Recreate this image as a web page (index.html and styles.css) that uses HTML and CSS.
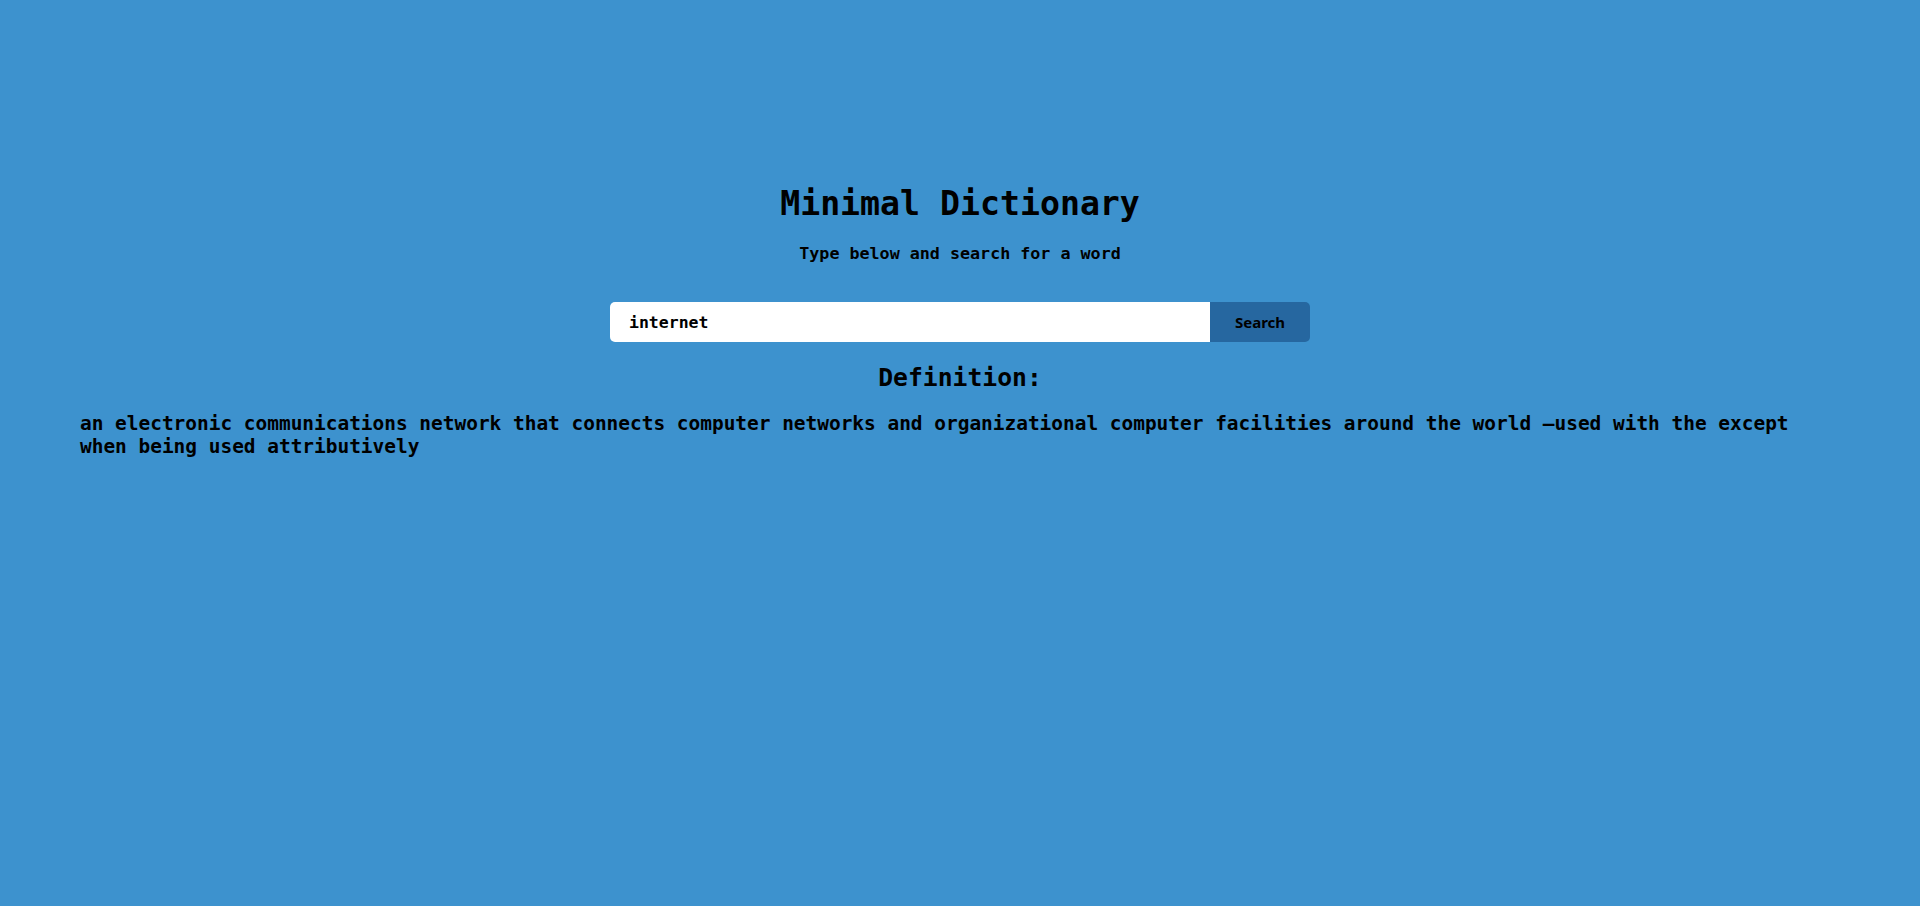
FILE: index.html
```html
<!DOCTYPE html>
<html lang="en">
<head>
<meta charset="utf-8">
<title>Minimal Dictionary</title>
<link rel="stylesheet" href="styles.css">
</head>
<body>
<main class="app">
  <h1 class="title">Minimal Dictionary</h1>
  <p class="subtitle">Type below and search for a word</p>
  <form class="search">
    <input class="search-input" type="text" value="internet">
    <button class="search-btn" type="button">Search</button>
  </form>
  <h2 class="def-heading">Definition:</h2>
  <p class="def-text">an electronic communications network that connects computer networks and organizational computer facilities around the world —used with the except when being used attributively</p>
</main>
</body>
</html>
```
FILE: styles.css
```css
html, body {
  margin: 0;
  padding: 0;
}
body {
  background: #3d92ce;
  min-height: 100vh;
  font-family: "DejaVu Sans Mono", "Liberation Mono", monospace;
  color: #000;
}
.app {
  padding-top: 184px;
  text-align: center;
}
.title {
  margin: 0;
  font-size: 33.2px;
  line-height: 40px;
  font-weight: bold;
}
.subtitle {
  margin: 19px 0 0;
  font-size: 16.7px;
  line-height: 20px;
  font-weight: bold;
}
.search {
  margin-top: 39px;
  display: flex;
  justify-content: center;
}
.search-input {
  width: 600px;
  height: 40px;
  box-sizing: border-box;
  border: none;
  outline: none;
  border-radius: 5px 0 0 5px;
  background: #fff;
  padding: 0 0 0 19px;
  font-family: "DejaVu Sans Mono", monospace;
  font-size: 16.5px;
  font-weight: bold;
  color: #000;
}
.search-btn {
  width: 100px;
  height: 40px;
  border: none;
  border-radius: 0 5px 5px 0;
  background: #2667a0;
  color: #000;
  font-family: "Noto Sans", sans-serif;
  font-size: 15px;
  font-weight: bold;
  padding: 0;
}
.def-heading {
  margin: 21px 0 0;
  font-size: 24.7px;
  line-height: 30px;
  font-weight: bold;
}
.def-text {
  margin: 19px 0 0;
  padding: 0 80px;
  text-align: left;
  font-size: 19.45px;
  line-height: 23px;
  font-weight: bold;
}
```
